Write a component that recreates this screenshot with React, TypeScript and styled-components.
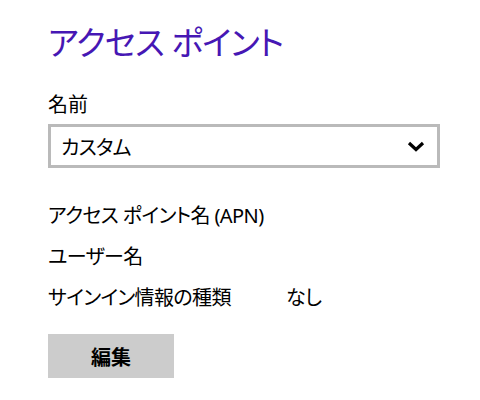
import React from "react";
import styled, { createGlobalStyle } from "styled-components";

const GlobalStyle = createGlobalStyle`
  body {
    margin: 0;
    background: #ffffff;
    font-family: "Noto Sans", "Noto Sans CJK JP", sans-serif;
  }
`;

const Page = styled.div`
  width: 480px;
  height: 400px;
  box-sizing: border-box;
  padding: 19px 40px 0 48px;
  background: #fff;
  overflow: hidden;
`;

const Title = styled.h1`
  margin: 0;
  font-size: 33px;
  font-weight: 400;
  line-height: 48px;
  letter-spacing: -1px;
  color: #4617b4;
  font-feature-settings: "palt";
`;

const Label = styled.div`
  margin-top: 25px;
  font-size: 20px;
  line-height: 26px;
  color: #000;
`;

const Select = styled.div`
  margin-top: 6px;
  height: 44px;
  box-sizing: border-box;
  border: 3px solid #bababa;
  display: flex;
  align-items: center;
  justify-content: space-between;
  padding: 0 12px 0 10px;
  font-size: 20px;
  letter-spacing: -0.8px;
  color: #000;
  font-feature-settings: "palt";
`;

const Fields = styled.div`
  margin-top: 34px;
  display: flex;
  flex-direction: column;
  gap: 14px;
`;

const Row = styled.div`
  display: grid;
  grid-template-columns: 238px auto;
  font-size: 20px;
  line-height: 27px;
  letter-spacing: -0.6px;
  color: #000;
  font-feature-settings: "palt";
`;

const Button = styled.button`
  margin-top: 23px;
  width: 126px;
  height: 44px;
  border: none;
  background: #cccccc;
  font-family: inherit;
  font-size: 20px;
  font-weight: 700;
  color: #000;
  padding: 0;
`;

const Chevron = () => (
  <svg width="18" height="11" viewBox="0 0 18 11">
    <path d="M2 2 L9 8.5 L16 2" fill="none" stroke="#000" strokeWidth="3.2" />
  </svg>
);

export default function App() {
  return (
    <Page>
      <GlobalStyle />
      <Title>アクセス ポイント</Title>
      <Label>名前</Label>
      <Select>
        <span>カスタム</span>
        <Chevron />
      </Select>
      <Fields>
        <Row>
          <span>アクセス ポイント名 (APN)</span>
        </Row>
        <Row>
          <span>ユーザー名</span>
        </Row>
        <Row>
          <span>サインイン情報の種類</span>
          <span>なし</span>
        </Row>
      </Fields>
      <Button>編集</Button>
    </Page>
  );
}
